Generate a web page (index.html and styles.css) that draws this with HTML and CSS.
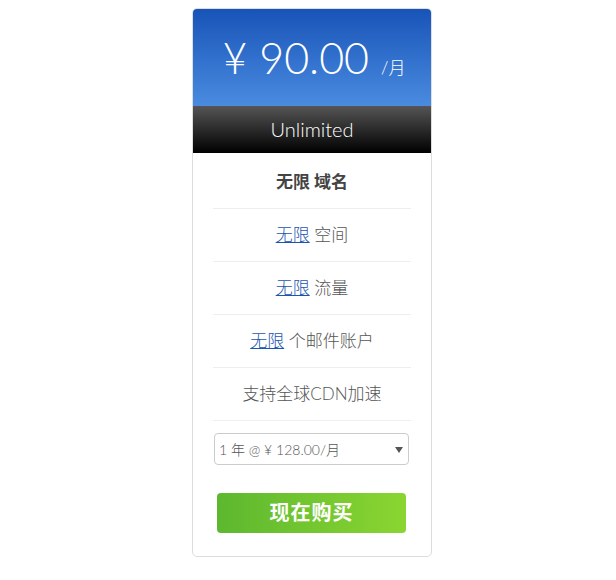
FILE: index.html
```html
<!DOCTYPE html>
<html lang="zh-CN">
<head>
    <meta charset="UTF-8">
    <title>Unlimited 套餐</title>
    <link rel="stylesheet" href="styles.css">
</head>
<body>
    <div class="plan">
        <div class="plan-price">
            <span class="amount">¥ 90.00</span>
            <span class="unit">/月</span>
        </div>
        <div class="plan-name">Unlimited</div>

        <ul class="features">
            <li><strong>无限 域名</strong></li>
            <li><a href="#">无限</a> 空间</li>
            <li><a href="#">无限</a> 流量</li>
            <li><a href="#">无限</a> 个邮件账户</li>
            <li>支持全球CDN加速</li>
        </ul>

        <div class="cycle">
            <div class="select-wrap">
                <select>
                    <option>1 年 @ ¥ 128.00/月</option>
                    <option>2 年 @ ¥ 108.00/月</option>
                    <option>3 年 @ ¥ 90.00/月</option>
                </select>
            </div>
        </div>

        <div class="order">
            <button>现在购买</button>
        </div>
    </div>
</body>
</html>
```

FILE: styles.css
```css
body {
    margin: 8px;
    font-family: Lato, "Noto Sans CJK SC", sans-serif;
    font-weight: 300;
    color: #555;
    background: #fff;
}
.plan {
    width: 238px;
    margin-left: 184px;
    border: 1px solid #ddd;
    border-radius: 5px;
    overflow: hidden;
}
.plan-price {
    height: 97px;
    display: flex;
    align-items: center;
    justify-content: center;
    gap: 12px;
    padding-left: 4px;
    color: #fff;
    background: linear-gradient(to bottom, #1854b8, #4a8be0);
}
.amount {
    font-size: 43px;
}
.unit {
    font-size: 17px;
    margin-top: 18px;
}
.plan-name {
    height: 47px;
    line-height: 47px;
    text-align: center;
    color: #fff;
    font-size: 20px;
    background: linear-gradient(to bottom, #555, #000);
}
.features {
    list-style: none;
    margin: 0;
    padding: 3px 20px 0;
}
.features li {
    height: 52px;
    line-height: 52px;
    text-align: center;
    font-size: 17px;
    border-bottom: 1px solid #eee;
}
.features strong {
    font-weight: bold;
    color: #444;
}
.features a {
    color: #1a55b0;
}
.cycle {
    padding: 12px 22px 0 21px;
}
.select-wrap {
    position: relative;
}
.select-wrap::after {
    content: "";
    position: absolute;
    right: 6px;
    top: 14px;
    border-left: 4px solid transparent;
    border-right: 4px solid transparent;
    border-top: 6px solid #555;
    pointer-events: none;
}
.cycle select {
    display: block;
    width: 100%;
    height: 32px;
    padding: 0 6px 0 4px;
    border: 1px solid #ccc;
    border-radius: 4px;
    background: #fff;
    color: #555;
    font-family: Lato, "Noto Sans CJK SC", sans-serif;
    font-weight: 300;
    font-size: 14px;
    appearance: none;
    -webkit-appearance: none;
}
.order {
    padding: 28px 25px 23px 24px;
}
.order button {
    width: 100%;
    height: 40px;
    padding: 0 0 3px;
    border: none;
    border-radius: 4px;
    color: #fff;
    font-family: "Noto Sans CJK SC", sans-serif;
    font-weight: bold;
    font-size: 20px;
    letter-spacing: 1px;
    background: linear-gradient(to right, #5db82f, #8ad531);
    cursor: pointer;
}
```
